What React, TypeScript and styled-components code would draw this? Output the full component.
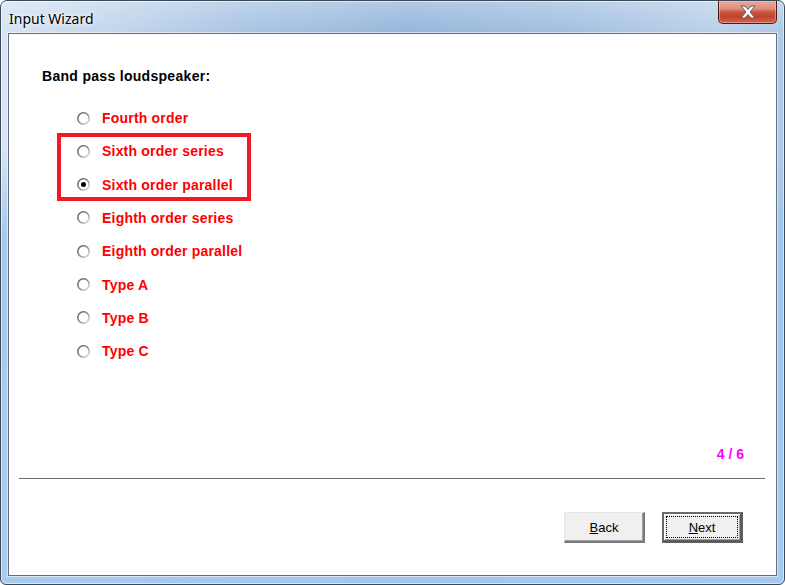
import React from "react";
import styled, { createGlobalStyle } from "styled-components";

const Global = createGlobalStyle`
  html, body { margin: 0; padding: 0; background: #ffffff; }
  body { font-family: "Liberation Sans", Arial, sans-serif; }
`;

const Window = styled.div`
  width: 785px;
  height: 585px;
  box-sizing: border-box;
  border: 1px solid #3b4a5b;
  border-radius: 7px 7px 6px 6px;
  padding: 0 7px 8px 7px;
  display: flex;
  flex-direction: column;
  background:
    linear-gradient(180deg, rgba(255, 255, 255, 0.25) 0px, rgba(255, 255, 255, 0) 30px),
    linear-gradient(180deg, rgba(160, 196, 236, 0) 0px, rgba(160, 196, 236, 0) 150px, rgba(160, 196, 236, 0.85) 230px, rgba(166, 200, 238, 0.9) 100%),
    linear-gradient(90deg, #d7e4f3 0%, #c3d6ec 14%, #a9c4e3 32%, #98b7db 52%, #a3c0e1 72%, #bcd1e9 92%, #b0c9e6 100%);
  box-shadow: inset 0 0 0 1px rgba(255, 255, 255, 0.55);
`;

const TitleBar = styled.div`
  height: 32px;
  display: flex;
  align-items: flex-start;
`;

const Title = styled.div`
  margin: 9px 0 0 1px;
  font-family: "Noto Sans", "Open Sans", sans-serif;
  font-size: 14px;
  line-height: 18px;
  color: #000;
  text-shadow: 0 0 6px rgba(255, 255, 255, 0.9), 0 0 3px rgba(255, 255, 255, 0.9);
`;

const CloseButton = styled.div`
  margin-left: auto;
  width: 59px;
  height: 23px;
  box-sizing: border-box;
  border: 1px solid #4b1b14;
  border-top: none;
  border-radius: 0 0 5px 5px;
  display: flex;
  align-items: center;
  justify-content: center;
  background: linear-gradient(
    180deg,
    #e9a99b 0%,
    #de8e7f 35%,
    #c9563f 50%,
    #c4432c 70%,
    #d0644a 100%
  );
  box-shadow: inset 0 0 0 1px rgba(255, 210, 200, 0.45);
`;

const Client = styled.div`
  flex: 1;
  background: #ffffff;
  border: 1px solid #5f6e80;
  box-shadow: 0 0 0 1px rgba(255, 255, 255, 0.55);
  display: flex;
  flex-direction: column;
`;

const Heading = styled.div`
  margin: 35px 0 0 33px;
  font-size: 14px;
  font-weight: bold;
  line-height: 15px;
  letter-spacing: 0.3px;
  color: #000;
`;

const OptionList = styled.div`
  position: relative;
  margin-top: 24px;
  display: grid;
  grid-auto-rows: 20px;
  row-gap: 13.333px;
`;

const Highlight = styled.div`
  position: absolute;
  left: 48px;
  top: 25px;
  width: 194px;
  height: 68px;
  box-sizing: border-box;
  border: 4px solid #ed1c24;
  pointer-events: none;
`;

const OptionRow = styled.label`
  display: flex;
  align-items: center;
  padding-left: 68px;
  gap: 12px;
`;

const OptionLabel = styled.span`
  font-size: 14px;
  font-weight: bold;
  line-height: 20px;
  letter-spacing: 0.2px;
  color: #ff0000;
`;

const Spacer = styled.div`
  flex: 1;
`;

const Footer = styled.div`
  display: flex;
  flex-direction: column;
  padding-bottom: 32px;
`;

const PageIndicator = styled.div`
  align-self: flex-end;
  margin-right: 32px;
  font-size: 14px;
  font-weight: bold;
  line-height: 20px;
  color: #ff00ff;
`;

const Separator = styled.div`
  margin: 14px 11px 33px 10px;
  height: 1px;
  background: #6f6f6f;
`;

const ButtonRow = styled.div`
  display: flex;
  justify-content: flex-end;
  gap: 17px;
  padding-right: 33px;
`;

const Button = styled.div<{ $default?: boolean }>`
  position: relative;
  width: 81px;
  height: 31px;
  box-sizing: border-box;
  background: #f0f0f0;
  display: flex;
  align-items: center;
  justify-content: center;
  font-size: 13px;
  color: #000;
  border-style: solid;
  border-width: ${(p) => (p.$default ? "2px 3px 3px 2px" : "1px 2px 2px 1px")};
  border-color: ${(p) =>
    p.$default ? "#6a6a6a #5e5e5e #5e5e5e #6a6a6a" : "#e6e6e6 #7a7a7a #7a7a7a #e6e6e6"};
  box-shadow: ${(p) =>
    p.$default ? "inset 1px 1px 0 #ffffff, inset -1px -1px 0 #a0a0a0" : "inset -1px -1px 0 #a0a0a0"};

  &::after {
    content: "";
    display: ${(p) => (p.$default ? "block" : "none")};
    position: absolute;
    inset: 2px;
    border: 1px dotted #000;
  }
`;

const Radio = ({ checked }: { checked?: boolean }) => (
  <svg width="13" height="13" viewBox="0 0 13 13">
    <defs>
      <linearGradient id="rg" x1="0" y1="0" x2="1" y2="1">
        <stop offset="0" stopColor="#555555" />
        <stop offset="0.5" stopColor="#888888" />
        <stop offset="1" stopColor="#e8e8e8" />
      </linearGradient>
    </defs>
    <circle cx="6.5" cy="6.5" r="5.7" fill="#ffffff" stroke="url(#rg)" strokeWidth="1.5" />
    {checked && <circle cx="6.5" cy="6.5" r="2.5" fill="#000" />}
  </svg>
);

const CloseGlyph = () => (
  <svg width="16" height="14" viewBox="0 0 16 14">
    <polygon
      points="1,1 5,1 8,4.5 11,1 15,1 10,7 15,13 11,13 8,9.5 5,13 1,13 6,7"
      fill="#ffffff"
      stroke="#5a5a5a"
      strokeWidth="1"
      strokeLinejoin="round"
    />
  </svg>
);

const options = [
  "Fourth order",
  "Sixth order series",
  "Sixth order parallel",
  "Eighth order series",
  "Eighth order parallel",
  "Type A",
  "Type B",
  "Type C",
];

export default function App() {
  return (
    <>
      <Global />
      <Window>
        <TitleBar>
          <Title>Input Wizard</Title>
          <CloseButton>
            <CloseGlyph />
          </CloseButton>
        </TitleBar>
        <Client>
          <Heading>Band pass loudspeaker:</Heading>
          <OptionList>
            {options.map((o, i) => (
              <OptionRow key={o}>
                <Radio checked={i === 2} />
                <OptionLabel>{o}</OptionLabel>
              </OptionRow>
            ))}
            <Highlight />
          </OptionList>
          <Spacer />
          <Footer>
            <PageIndicator>4 / 6</PageIndicator>
            <Separator />
            <ButtonRow>
              <Button>
                <span>
                  <u>B</u>ack
                </span>
              </Button>
              <Button $default>
                <span>
                  <u>N</u>ext
                </span>
              </Button>
            </ButtonRow>
          </Footer>
        </Client>
      </Window>
    </>
  );
}
